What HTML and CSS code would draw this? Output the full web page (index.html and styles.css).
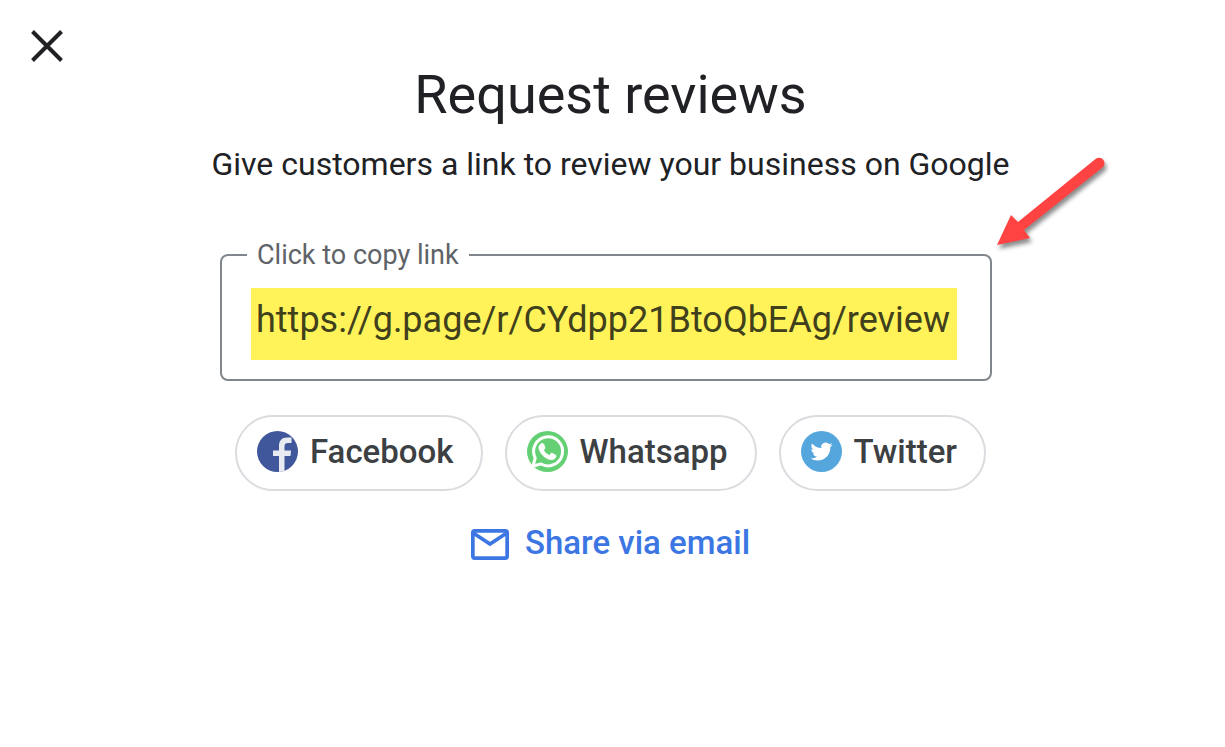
FILE: index.html
```html
<!DOCTYPE html>
<html lang="en">
<head>
<meta charset="utf-8">
<meta name="viewport" content="width=device-width, initial-scale=1">
<title>Request reviews</title>
<link rel="stylesheet" href="styles.css">
</head>
<body>
<main class="dialog">
  <button class="close" type="button" aria-label="Close">
    <svg width="32" height="32" viewBox="0 0 32 32" aria-hidden="true"><path d="M1.5 1.5l29 29M30.500 1.500l-29 29" stroke="#202124" stroke-width="4" fill="none"/></svg>
  </button>
  <h1 class="title">Request reviews</h1>
  <p class="subtitle">Give customers a link to review your business on Google</p>
  <div class="field-wrap">
    <fieldset class="field">
      <legend class="field-legend"><label for="link">Click to copy link</label></legend>
      <input class="field-input" id="link" type="text" readonly value="https://g.page/r/CYdpp21BtoQbEAg/review">
    </fieldset>
    <svg class="arrow" width="124" height="104" viewBox="990 150 124 104" aria-hidden="true">
      <path d="M997 245L1011 215L1018 222L1095.500 159A5.500 5.500 0 0 1 1102.500 167.500L1024 230L1030 238Z" fill="#ff4343"/>
    </svg>
  </div>
  <div class="chips">
    <button class="chip" type="button">
      <svg class="chip-icon" viewBox="0 0 41 41" aria-hidden="true">
        <defs><clipPath id="disc"><circle cx="20.500" cy="20.500" r="20.500"/></clipPath></defs>
        <circle cx="20.500" cy="20.500" r="20.500" fill="#41579b"/>
        <path clip-path="url(#disc)" d="M22 41V25H16V19.500H22V15C22 9.500 25 6.500 30 6.500H34.500V12H31C28.500 12 27.500 13 27.500 15.500V19.500H34L33.500 25H27.500V41Z" fill="#e9ebf2"/>
      </svg>
      <span>Facebook</span>
    </button>
    <button class="chip" type="button">
      <svg class="chip-icon" viewBox="0 0 41 41" aria-hidden="true">
        <circle cx="20.500" cy="20.500" r="20.500" fill="#64d073"/>
        <path d="M6 35L8.200 27A14.500 14.500 0 1 1 14 33Z" fill="none" stroke="#fff" stroke-width="3" stroke-linejoin="round"/>
        <path d="M15 12.500C12 13.500 11.500 16.500 12.500 19C14.500 24 18.500 27.500 23.500 28.500C26.500 29 29 27.500 29 24.500L24.500 22L22.500 24.500C19.500 23.500 17.500 21.500 16.500 19L18 17L16.500 13Z" fill="#fff" stroke="#fff" stroke-linejoin="round"/>
      </svg>
      <span>Whatsapp</span>
    </button>
    <button class="chip" type="button">
      <svg class="chip-icon" viewBox="0 0 41 41" aria-hidden="true">
        <circle cx="20.500" cy="20.500" r="20.500" fill="#55a6dc"/>
        <path transform="translate(9.500 9.500) scale(.92)" d="M23.950 4.570a10 10 0 0 1-2.820.77 4.960 4.960 0 0 0 2.160-2.720c-.95.550-2 .950-3.130 1.180a4.920 4.920 0 0 0-8.380 4.480C7.690 8.090 4.070 6.130 1.640 3.160a4.820 4.820 0 0 0-.67 2.470c0 1.710.87 3.210 2.190 4.100a4.900 4.900 0 0 1-2.230-.62v.06a4.920 4.920 0 0 0 3.950 4.830 5 5 0 0 1-2.210.080 4.940 4.940 0 0 0 4.600 3.420A9.870 9.870 0 0 1 0 19.540a13.990 13.990 0 0 0 7.550 2.210c9.050 0 14-7.500 14-13.980 0-.21 0-.42-.020-.63a9.940 9.940 0 0 0 2.460-2.550z" fill="#fff"/>
      </svg>
      <span>Twitter</span>
    </button>
  </div>
  <a class="email" href="mailto:">
    <svg class="email-icon" width="38" height="31" viewBox="0 0 38 31" fill="none" stroke="#3b76e3" stroke-width="3.700" aria-hidden="true"><rect x="1.850" y="1.850" width="34.300" height="27.300" rx="1.800"/><path d="M3 4.500L19 15L35 4.500"/></svg>
    <span>Share via email</span>
  </a>
</main>
</body>
</html>
```
FILE: styles.css
```css
* { box-sizing: border-box; }
body {
  margin: 0;
  background: #fff;
  color: #202124;
  font-family: Roboto, "Liberation Sans", sans-serif;
}
button { font: inherit; cursor: pointer; }
.dialog {
  position: relative;
  display: flex;
  flex-direction: column;
  align-items: center;
  padding: 63px 4px 32px 0;
}
.close {
  position: absolute;
  top: 22px;
  left: 23px;
  display: flex;
  padding: 8px;
  border: 0;
  background: none;
}
.title {
  margin: 0;
  font-size: 54px;
  line-height: 64px;
  font-weight: 400;
}
.subtitle {
  margin: 17px 0 0;
  font-size: 32px;
  line-height: 40px;
}
.field-wrap {
  position: relative;
  width: 100%;
  max-width: 772px;
  margin: 55px 9px 0 0;
}
.field {
  min-width: 0;
  margin: 0;
  padding: 17px 33px 19px 25px;
  border: 2px solid #80868b;
  border-radius: 8px;
}
.field-legend {
  padding: 0 10px;
  color: #5f6368;
  font-size: 27px;
  line-height: 32px;
}
.field-input {
  display: block;
  width: calc(100% - 4px);
  height: 72px;
  margin-left: 4px;
  padding: 0 0 8px 5px;
  border: 0;
  outline: 0;
  background: #fff359;
  color: #40401c;
  font: 36px Roboto, "Liberation Sans", sans-serif;
}
.arrow {
  position: absolute;
  top: -89px;
  right: -122px;
  filter: drop-shadow(2px 4px 2px rgba(0, 0, 0, .45));
  pointer-events: none;
}
.chips {
  display: flex;
  flex-wrap: wrap;
  justify-content: center;
  gap: 22px;
  margin-top: 34px;
}
.chip {
  display: flex;
  align-items: center;
  gap: 12px;
  height: 76px;
  padding: 0 27px 3px 20px;
  border: 2px solid #dadce0;
  border-radius: 38px;
  background: #fff;
  color: #3c4043;
  font-size: 33px;
  font-weight: 500;
}
.chip-icon { width: 41px; height: 41px; }
.email {
  display: flex;
  align-items: flex-start;
  gap: 16px;
  margin-top: 32px;
  color: #3b76e3;
  font-size: 33px;
  line-height: 40px;
  font-weight: 500;
  text-decoration: none;
}
.email-icon { margin-top: 6px; }
```
